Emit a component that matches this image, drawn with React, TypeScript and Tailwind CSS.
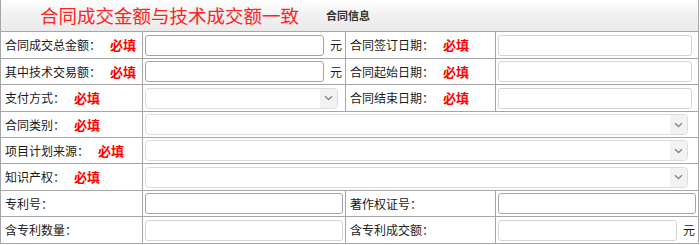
import React from "react";

const F = { fontFamily: '"Noto Sans CJK SC", "Noto Sans", sans-serif' };

function Req() {
  return <span className="ml-[9px] text-[13px] font-bold text-[#ff0000]">必填</span>;
}

function Input({ w, dark }: { w: string; dark?: boolean }) {
  return (
    <div
      className={`h-[21px] rounded-[3px] border bg-white ${w} ${
        dark ? "border-[#a4a4ac]" : "border-[#d4d4d4]"
      }`}
    />
  );
}

function Select({ w }: { w: string }) {
  return (
    <div className={`flex h-[21px] items-stretch justify-end rounded-[4px] border border-[#dcdcdc] bg-white ${w}`}>
      <div className="flex w-[17px] items-center justify-center rounded-r-[4px] bg-[#f2f2f2]">
        <svg width="9" height="6" viewBox="0 0 9 6">
          <path d="M1 1.2 L4.5 4.6 L8 1.2" fill="none" stroke="#888" strokeWidth="1.4" />
        </svg>
      </div>
    </div>
  );
}

function Label({ text, req, w }: { text: string; req?: boolean; w: string }) {
  return (
    <div className={`flex items-center border-r border-[#a6a6a6] pl-[4px] text-[12px] text-[#1a1a1a] ${w}`}>
      <span>{text}</span>
      {req && <Req />}
    </div>
  );
}

function Cell({ w, children, last }: { w: string; children: React.ReactNode; last?: boolean }) {
  return (
    <div className={`flex items-center pl-[2px] ${last ? "" : "border-r border-[#a6a6a6]"} ${w}`}>
      {children}
    </div>
  );
}

function Row({ h, children }: { h: string; children: React.ReactNode }) {
  return <div className={`flex border-b border-[#a6a6a6] ${h}`}>{children}</div>;
}

function Yuan() {
  return <span className="ml-[6px] text-[12px] text-[#1a1a1a]">元</span>;
}

export default function App() {
  return (
    <div className="h-[245px] w-[700px] overflow-hidden bg-white" style={F}>
      <div className="w-[699px] border-l border-r border-[#a6a6a6]">
        <div className="flex h-[32px] items-center border-b border-[#a6a6a6] bg-gradient-to-b from-[#ffffff] via-[#f1f1f1] to-[#ebebeb]">
          <span className="ml-[39px] text-[18.5px] leading-none text-[#ff2222]">合同成交金额与技术成交额一致</span>
          <span className="ml-[27px] text-[11px] font-bold text-[#333]">合同信息</span>
        </div>
        <Row h="h-[27px]">
          <Label text="合同成交总金额：" req w="w-[142px]" />
          <Cell w="w-[203px]">
            <Input w="w-[179px]" dark />
            <Yuan />
          </Cell>
          <Label text="合同签订日期：" req w="w-[150px]" />
          <Cell w="w-[202px]" last>
            <Input w="w-[194px]" />
          </Cell>
        </Row>
        <Row h="h-[26px]">
          <Label text="其中技术交易额：" req w="w-[142px]" />
          <Cell w="w-[203px]">
            <Input w="w-[179px]" dark />
            <Yuan />
          </Cell>
          <Label text="合同起始日期：" req w="w-[150px]" />
          <Cell w="w-[202px]" last>
            <Input w="w-[194px]" />
          </Cell>
        </Row>
        <Row h="h-[27px]">
          <Label text="支付方式：" req w="w-[142px]" />
          <Cell w="w-[203px]">
            <Select w="w-[193px]" />
          </Cell>
          <Label text="合同结束日期：" req w="w-[150px]" />
          <Cell w="w-[202px]" last>
            <Input w="w-[194px]" />
          </Cell>
        </Row>
        <Row h="h-[26px]">
          <Label text="合同类别：" req w="w-[142px]" />
          <Cell w="w-[555px]" last>
            <Select w="w-[543px]" />
          </Cell>
        </Row>
        <Row h="h-[26px]">
          <Label text="项目计划来源：" req w="w-[142px]" />
          <Cell w="w-[555px]" last>
            <Select w="w-[543px]" />
          </Cell>
        </Row>
        <Row h="h-[27px]">
          <Label text="知识产权：" req w="w-[142px]" />
          <Cell w="w-[555px]" last>
            <Select w="w-[543px]" />
          </Cell>
        </Row>
        <Row h="h-[26px]">
          <Label text="专利号：" w="w-[142px]" />
          <Cell w="w-[203px]">
            <Input w="w-[198px]" dark />
          </Cell>
          <Label text="著作权证号：" w="w-[150px]" />
          <Cell w="w-[202px]" last>
            <Input w="w-[198px]" dark />
          </Cell>
        </Row>
        <Row h="h-[27px]">
          <Label text="含专利数量：" w="w-[142px]" />
          <Cell w="w-[203px]">
            <Input w="w-[198px]" />
          </Cell>
          <Label text="含专利成交额：" w="w-[150px]" />
          <Cell w="w-[202px]" last>
            <Input w="w-[179px]" />
            <Yuan />
          </Cell>
        </Row>
      </div>
    </div>
  );
}
